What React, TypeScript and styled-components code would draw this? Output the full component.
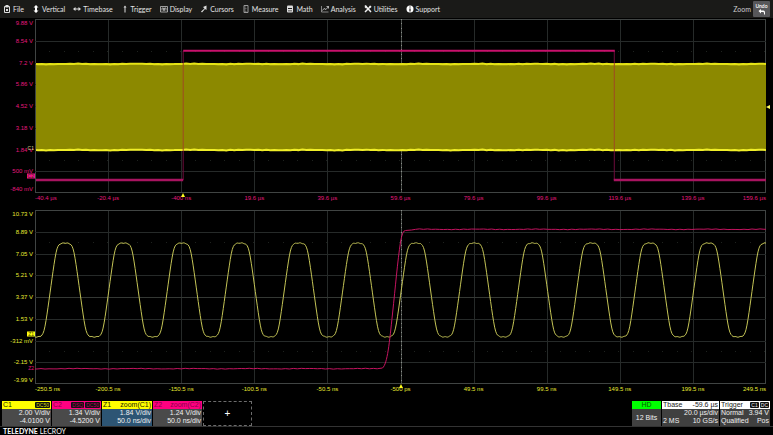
import React from "react";
import styled, { createGlobalStyle } from "styled-components";

const PINK = "#e6187e";
const YELLOW = "#e8e832";

const GlobalStyle = createGlobalStyle`
  * { box-sizing: border-box; }
  html, body { margin: 0; background: #000; }
  body { font-family: "Liberation Sans", Arial, sans-serif; font-size: 7px; color: #ddd; }
  button { font: inherit; color: inherit; border: 0; padding: 0; margin: 0; background: none; cursor: pointer; }
`;

const Screen = styled.div`
  display: flex;
  flex-direction: column;
  min-height: 100vh;
  background: #000;
`;

const MenuBar = styled.header`
  display: flex;
  align-items: center;
  justify-content: space-between;
  height: 18px;
  margin-bottom: 1px;
  padding: 0 3px;
  background: #1a1a18;
`;

const Menu = styled.nav`
  display: flex;
  align-items: center;
  gap: 8px;
`;

const MenuButton = styled.button`
  display: flex;
  align-items: center;
  gap: 2px;
  line-height: 10px;
  font-family: Lato, sans-serif;
  color: #e4e4e4;
  white-space: nowrap;

  svg { width: 8px; height: 8px; flex: none; }
`;

const ZoomGroup = styled.div`
  display: flex;
  align-items: center;
  gap: 2px;
  font-family: Lato, sans-serif;
  color: #ccc;
`;

const UndoButton = styled.button`
  display: flex;
  flex-direction: column;
  align-items: center;
  width: 17px;
  height: 16px;
  padding-top: 2px;
  background: #57575a;
  border-radius: 1px;
  font-size: 5px;
  font-weight: 600;
  line-height: 6px;
  color: #fff;

  svg { width: 8px; height: 6px; }
`;

const Plot = styled.section<{ $color: string }>`
  flex: 1 0 auto;
  display: grid;
  grid-template-columns: 35px minmax(0, 1fr);
  grid-template-rows: minmax(174px, 1fr) 17px;
  margin-right: 7px;
  font-size: 6px;
  line-height: 8px;
  color: ${(p) => p.$color};
`;

const VoltageAxis = styled.div`
  display: grid;
  grid-template-rows: 1fr repeat(7, 2fr) 1fr;
  align-items: center;
  justify-items: end;
  padding-right: 2px;
  white-space: nowrap;

  span:first-child { align-self: start; }
  span:last-child { align-self: end; }
`;

const TimeAxis = styled.div`
  grid-column: 2;
  display: grid;
  grid-template-columns: minmax(0, 1fr) repeat(9, minmax(0, 2fr)) minmax(0, 1fr);
  justify-items: center;
  align-items: start;
  padding-top: 1px;
  white-space: nowrap;

  span:first-child { justify-self: start; }
  span:last-child { justify-self: end; }
`;

const PlotArea = styled.div`
  position: relative;
  display: grid;
`;

const Trace = styled.svg`
  display: block;
  width: 100%;
  height: 0;
  min-height: 100%;

  path, line { vector-effect: non-scaling-stroke; fill: none; }
`;

const ChannelTag = styled.span<{ $top: number; $color: string; $outline?: boolean }>`
  position: absolute;
  right: 100%;
  top: ${(p) => p.$top}%;
  transform: translateY(-50%);
  padding: 0 1px;
  background: ${(p) => (p.$outline ? "transparent" : p.$color)};
  color: ${(p) => (p.$outline ? p.$color : "#3a3a00")};
  font-size: 5px;
  line-height: 5px;
`;

const TriggerMark = styled.svg<{ $left: number }>`
  position: absolute;
  left: ${(p) => p.$left}%;
  top: 100%;
  width: 4px;
  height: 4px;
  margin-left: -2px;
`;

const LevelMark = styled.svg`
  position: absolute;
  left: 100%;
  top: 50%;
  width: 4px;
  height: 4px;
  margin-top: -1px;
`;

const StatusBar = styled.footer`
  display: flex;
  justify-content: space-between;
  height: 26px;
  padding: 0 3px 0 2px;
  border-bottom: 1px solid #333;
`;

const Group = styled.div`
  display: flex;
  gap: 1px;
`;

const Descriptor = styled.button<{ $width: number; $body: string }>`
  display: flex;
  flex-direction: column;
  width: ${(p) => p.$width}px;
  background: ${(p) => p.$body};
  color: #f0f0f0;
  line-height: 8px;
  text-align: left;
  white-space: nowrap;
`;

const Heading = styled.span<{ $bg: string; $fg: string }>`
  display: flex;
  justify-content: space-between;
  align-items: center;
  height: 8px;
  padding: 0 1px;
  background: ${(p) => p.$bg};
  color: ${(p) => p.$fg};
`;

const Badge = styled.span<{ $fg: string }>`
  padding: 0 1px;
  margin-left: 1px;
  background: #111;
  border-radius: 1px;
  color: ${(p) => p.$fg};
  font-size: 5px;
  line-height: 6px;
`;

const Badges = styled.span`
  display: flex;
`;

const Values = styled.span`
  display: flex;
  justify-content: space-between;
  padding: 0 1px;
`;

const Right = styled(Values)`
  justify-content: flex-end;
`;

const Bits = styled.span`
  margin: auto;
`;

const AddButton = styled.button`
  width: 49px;
  border: 1px dashed #6c6c6c;
  color: #fff;
  font-size: 10px;
  line-height: 22px;
`;

const Brand = styled.div`
  height: 8px;
  padding-left: 3px;
  font-family: Lato, sans-serif;
  line-height: 8px;
  color: #fff;
`;

const icons: Record<string, React.ReactNode> = {
  File: <><path d="M3 3h10v12H3z" fill="none" stroke="#ddd" strokeWidth="2" /><path d="M5 0h6v5H5zM6 8h4v4H6z" fill="#ddd" /></>,
  Vertical: <path d="M8 0l5 5h-3v6h3l-5 5-5-5h3V5H3z" fill="#fff" />,
  Timebase: <path d="M0 8l5-4v3h6V4l5 4-5 4V9H5v3z" fill="#ddd" />,
  Trigger: <path d="M8 1l3 4H9v10H7V5H5z" fill="#ddd" />,
  Display: <><path d="M1 3h14v11H1z" fill="none" stroke="#ccc" strokeWidth="1.500" /><path d="M4 11V6h3v5h2V6h3v5" fill="none" stroke="#ccc" strokeWidth="1.500" /></>,
  Cursors: <path d="M13 1v9l-3-2-6 7-2-2 7-6-3-3z" fill="#ddd" />,
  Measure: <><path d="M4 1h8v14H4z" fill="none" stroke="#999" strokeWidth="2" /><path d="M5 4h3M5 7h4M5 10h3M5 13h4" stroke="#aaa" /></>,
  Math: <><rect x="2" y="1" width="12" height="14" rx="2" fill="#ddd" /><path d="M4 7h8M6 10v3M10 10v3" stroke="#222" strokeWidth="2" /></>,
  Analysis: <><path d="M1 2v12h14" fill="none" stroke="#aaa" strokeWidth="1.500" /><path d="M3 11l3-4 4 2 5-6M11 3h4v4" fill="none" stroke="#ddd" strokeWidth="1.500" /></>,
  Utilities: <><path d="M2 1l12 13M14 2L2 14" stroke="#eee" strokeWidth="3" /><path d="M1 4l4-3 2 4-3 2zM10 1l1 4 4 1" fill="#eee" /></>,
  Support: <><circle cx="8" cy="8" r="7" fill="#fff" /><path d="M8 7v6M8 3v2" stroke="#222" strokeWidth="2.500" /></>,
};

// Graticule: ten time divisions by eight voltage divisions.
function Graticule() {
  const cols = Array.from({ length: 11 }, (_, i) => i * 73);
  const rows = Array.from({ length: 9 }, (_, i) => i * 21.75);
  return (
    <g shapeRendering="crispEdges">
      {cols.map((x, i) => (
        <line key={`c${i}`} x1={Math.min(x + 0.5, 729.5)} x2={Math.min(x + 0.5, 729.5)} y1="0" y2="174" stroke={i % 10 ? "#262a29" : "#404443"} />
      ))}
      {rows.map((y, i) => (
        <line key={`r${i}`} x1="0" x2="730" y1={Math.min(y + 0.5, 173.5)} y2={Math.min(y + 0.5, 173.5)} stroke={i % 8 ? "#262a29" : "#404443"} />
      ))}
      <line x1="365.5" x2="365.5" y1="0" y2="174" stroke="#4c504c" />
      <line x1="365.5" x2="365.5" y1="0" y2="174" stroke="#8a8e8a" strokeDasharray="1 3.35" />
      <line x1="0" x2="730" y1="87.5" y2="87.5" stroke="#343834" />
      {[32.5, 141.5].map((y) => (
        <line key={y} x1="14" x2="730" y1={y} y2={y} stroke="#1e221e" strokeDasharray="1 13.6" />
      ))}
    </g>
  );
}

const clockPath = (() => {
  let d = "";
  for (let x = 0; x <= 730; x += 1) {
    const s = 1.42 * Math.sin(((x - 15.4) / 58.4) * 2 * Math.PI);
    const level = s / Math.pow(1 + Math.pow(Math.abs(s), 7), 1 / 7);
    const ripple = Math.abs(level) > 0.96 ? Math.sin(x * 1.3) * 0.3 : 0;
    d += `${x ? "L" : "M"}${x} ${(80 - level * 47.5 + ripple).toFixed(2)}`;
  }
  return d;
})();

const noisy = (from: number, to: number, y: number) => {
  let d = "";
  for (let x = from; x <= to; x += 4) d += `L${x} ${(y + Math.sin(x * 0.7) * 0.25 + Math.sin(x * 0.11) * 0.2).toFixed(2)}`;
  return `${d}L${to} ${y}`;
};

const stepPath = `M0 159${noisy(2, 342, 158.7)}L347 158C352 154 354 132 357 104S362 52 365 32Q367 20 370 20.5L376 20${noisy(380, 730, 19.3)}`;

const acqVolts = ["9.88 V", "8.54 V", "7.2 V", "5.86 V", "4.52 V", "3.18 V", "1.84 V", "500 mV", "-840 mV"];
const acqTimes = ["-40.4 µs", "-20.4 µs", "-400 ns", "19.6 µs", "39.6 µs", "59.6 µs", "79.6 µs", "99.6 µs", "119.6 µs", "139.6 µs", "159.6 µs"];
const zoomVolts = ["10.73 V", "8.89 V", "7.05 V", "5.21 V", "3.37 V", "1.53 V", "-312 mV", "-2.15 V", "-3.99 V"];
const zoomTimes = ["-250.5 ns", "-200.5 ns", "-150.5 ns", "-100.5 ns", "-50.5 ns", "-500 ps", "49.5 ns", "99.5 ns", "149.5 ns", "199.5 ns", "249.5 ns"];

function Labels({ items }: { items: string[] }) {
  return <>{items.map((t) => <span key={t}>{t}</span>)}</>;
}

function Mark({ left }: { left: number }) {
  return <TriggerMark $left={left} viewBox="0 0 4 4"><path d="M2 0l2 4H0z" fill="#ffff20" /></TriggerMark>;
}

export default function App() {
  return (
    <>
      <GlobalStyle />
      <Screen>
        <MenuBar>
          <Menu>
            {Object.keys(icons).map((name) => (
              <MenuButton key={name}>
                <svg viewBox="0 0 16 16" aria-hidden="true">{icons[name]}</svg>
                {name}
              </MenuButton>
            ))}
          </Menu>
          <ZoomGroup>
            Zoom
            <UndoButton>
              Undo
              <svg viewBox="0 0 16 12" aria-hidden="true">
                <path d="M6 0v3h5q3 0 3 4v4h-2V8q0-2-2-2H6v3L1 4z" fill="#fff" />
              </svg>
            </UndoButton>
          </ZoomGroup>
        </MenuBar>

        <Plot $color={PINK} aria-label="Acquisition">
          <VoltageAxis><Labels items={acqVolts} /></VoltageAxis>
          <PlotArea>
            <Trace viewBox="0 0 730 174" preserveAspectRatio="none">
              <Graticule />
              <rect x="1" y="44" width="729" height="87" fill="#8c8900" />
              <path d={`M1 45${noisy(3, 730, 45)}`} stroke="#e6e416" strokeWidth="2" />
              <path d={`M1 131${noisy(3, 730, 131)}`} stroke="#f0ee28" strokeWidth="2" />
              <path d="M148 32V44M148 132V161M578.500 32V44M578.500 132V161" stroke="#6e0c3c" />
              <path d="M148 44V132M578.500 44V132" stroke="#a04a20" />
              <path d="M1 161H148M578 161H730" stroke="#a81460" strokeWidth="2.500" />
              <path d="M148 31.800H579" stroke="#c8106c" strokeWidth="2" />
            </Trace>
            <ChannelTag $top={74} $color="#d8d890" $outline>C1</ChannelTag>
            <ChannelTag $top={90} $color="#f0108a">C2</ChannelTag>
            <Mark left={20.3} />
            <LevelMark viewBox="0 0 4 4"><path d="M0 2l4-2v4z" fill="#ffff60" /></LevelMark>
          </PlotArea>
          <TimeAxis><Labels items={acqTimes} /></TimeAxis>
        </Plot>

        <Plot $color={YELLOW} aria-label="Zoom">
          <VoltageAxis><Labels items={zoomVolts} /></VoltageAxis>
          <PlotArea>
            <Trace viewBox="0 0 730 174" preserveAspectRatio="none">
              <Graticule />
              <path d={clockPath} stroke="#c4c456" />
              <path d={stepPath} stroke="#c41460" />
            </Trace>
            <ChannelTag $top={71} $color="#ffff10">Z1</ChannelTag>
            <ChannelTag $top={91} $color="#e0107c" $outline>Z2</ChannelTag>
            <Mark left={50.1} />
          </PlotArea>
          <TimeAxis><Labels items={zoomTimes} /></TimeAxis>
        </Plot>

        <StatusBar>
          <Group>
            <Descriptor $width={49} $body="#4a4a4a">
              <Heading $bg="#ffff00" $fg="#222200">C1<Badge $fg="#d8d800">DC50</Badge></Heading>
              <Right>2.00 V/div</Right>
              <Right>-4.0100 V</Right>
            </Descriptor>
            <Descriptor $width={49} $body="#4a4a4a">
              <Heading $bg="#ff0080" $fg="#8a0048">C2<Badges><Badge $fg="#b8005c">DSQ</Badge><Badge $fg="#b8005c">DC50</Badge></Badges></Heading>
              <Right>1.34 V/div</Right>
              <Right>-4.5200 V</Right>
            </Descriptor>
            <Descriptor $width={50} $body="#2d5574">
              <Heading $bg="#ffff00" $fg="#222200">Z1<span>zoom(C1)</span></Heading>
              <Right>1.84 V/div</Right>
              <Right>50.0 ns/div</Right>
            </Descriptor>
            <Descriptor $width={49} $body="#4a4a4a">
              <Heading $bg="#ff0080" $fg="#8a0048">Z2<span>zoom(C2)</span></Heading>
              <Right>1.24 V/div</Right>
              <Right>50.0 ns/div</Right>
            </Descriptor>
            <AddButton aria-label="Add trace">+</AddButton>
          </Group>
          <Group>
            <Descriptor $width={29} $body="#404040">
              <Heading $bg="#00ff00" $fg="#006000"><Bits>HD</Bits></Heading>
              <Bits>12 Bits</Bits>
            </Descriptor>
            <Descriptor $width={57} $body="#404040">
              <Heading $bg="#ffffff" $fg="#222222">Tbase<span>-59.6 µs</span></Heading>
              <Right>20.0 µs/div</Right>
              <Values>2 MS<span>10 GS/s</span></Values>
            </Descriptor>
            <Descriptor $width={50} $body="#404040">
              <Heading $bg="#ffffff" $fg="#222222">Trigger<Badges><Badge $fg="#eeeeee">C1</Badge><Badge $fg="#eeeeee">DC</Badge></Badges></Heading>
              <Values>Normal<span>3.94 V</span></Values>
              <Values>Qualified<span>Pos</span></Values>
            </Descriptor>
          </Group>
        </StatusBar>
        <Brand><b>TELEDYNE</b> LECROY</Brand>
      </Screen>
    </>
  );
}
